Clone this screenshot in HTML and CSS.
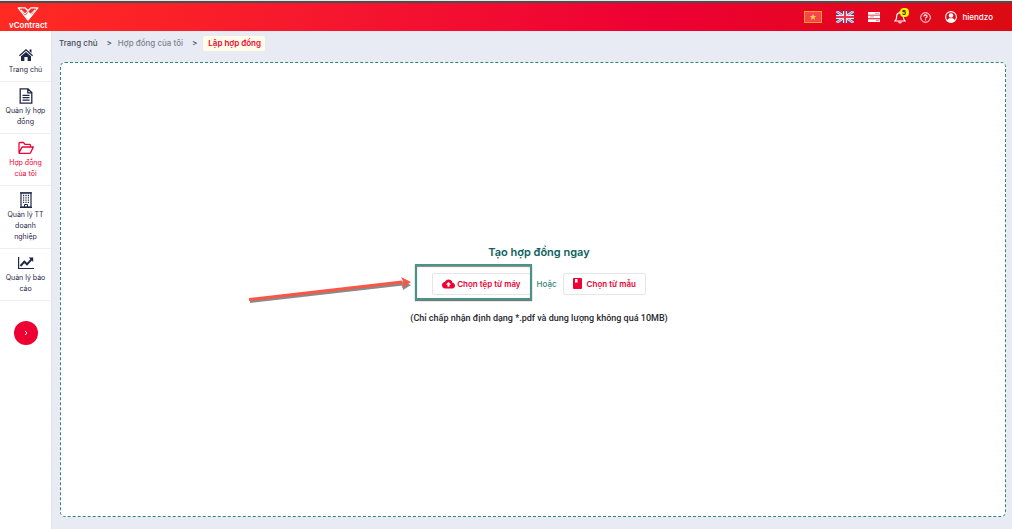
FILE: index.html
```html
<!DOCTYPE html>
<html lang="vi">
<head>
<meta charset="utf-8">
<meta name="viewport" content="width=device-width, initial-scale=1">
<title>vContract</title>
<link rel="stylesheet" href="styles.css">
</head>
<body>
<header class="topbar">
  <a class="brand" href="#">
    <svg class="brand-mark" viewBox="0 0 24 15" aria-hidden="true">
      <path d="M1.500 1H9L12 4L15 1H22.500L12 14Z" fill="none" stroke="#fff" stroke-width="1.400" stroke-linejoin="round"/>
      <path d="M4.500 3L9 7.500L12 4M19.500 3L15 7.500" stroke="#fff" stroke-width="1.100" fill="none"/>
      <path d="M12 4.500L16.500 8.500L12 14L8.500 9.500L11 7.500Z" fill="#fff"/>
    </svg>
    <span class="brand-name">vContract</span>
  </a>
  <nav class="tools" aria-label="Công cụ">
    <button class="tool flag-tool" type="button" aria-label="Tiếng Việt">
      <svg width="18" height="12" viewBox="0 0 18 12"><rect x=".5" y=".5" width="17" height="11" fill="#f74452" stroke="#f2a21c"/><path d="M9 2.800l.9 2.200h2.300l-1.800 1.500.7 2.400L9 7.500 6.900 8.900l.7-2.400L5.800 5h2.300z" fill="#ffd43a"/></svg>
    </button>
    <button class="tool flag-tool" type="button" aria-label="English">
      <svg width="18" height="12" viewBox="0 0 18 12"><rect width="18" height="12" fill="#3d4f9b"/><path d="M0 0L18 12M18 0L0 12" stroke="#f3dfe8" stroke-width="2.600"/><path d="M0 0L18 12M18 0L0 12" stroke="#e0495f" stroke-width=".8"/><path d="M9 0V12M0 6H18" stroke="#f6e6ec" stroke-width="4"/><path d="M9 0V12M0 6H18" stroke="#df3a50" stroke-width="2"/></svg>
    </button>
    <button class="tool" type="button" aria-label="Danh sách">
      <svg width="12" height="10" viewBox="0 0 12 10"><path d="M0 0h12v2.700H0zM0 3.600h12v2.700H0zM0 7.200h12v2.700H0z" fill="#fff"/><path d="M7 1.300h4M2 4.900h4M8 8.500h3" stroke="#ee7786" stroke-width=".8"/></svg>
    </button>
    <button class="tool bell" type="button" aria-label="Thông báo">
      <svg width="12" height="13" viewBox="0 0 12 13" fill="none" stroke="#fff" stroke-width="1.200"><path d="M1 10h10C9.300 8.500 9.300 7 9.300 5.200 9.300 3 8 1.800 6 1.800S2.700 3 2.700 5.200C2.700 7 2.700 8.500 1 10Z"/><path d="M6 .3v1.500M4.700 10.500c0 2 2.600 2 2.600 0"/></svg>
      <span class="badge">5</span>
    </button>
    <button class="tool" type="button" aria-label="Trợ giúp">
      <svg width="11" height="11" viewBox="0 0 11 11" fill="none" stroke="#fff"><circle cx="5.500" cy="5.500" r="4.800"/><path d="M3.900 4.400c0-2 3.200-2 3.200 0 0 1.200-1.600 1-1.600 2.200M5.500 7.300v1.100" stroke-width="1.100"/></svg>
    </button>
    <button class="tool account" type="button">
      <svg width="12" height="12" viewBox="0 0 12 12"><circle cx="6" cy="6" r="5.400" fill="none" stroke="#fff" stroke-width="1.100"/><circle cx="6" cy="4.500" r="2.300" fill="#fff"/><path d="M2 9.500C2.500 7.600 4 7.200 6 7.200s3.500.4 4 2.300C8 11.600 4 11.600 2 9.500Z" fill="#fff"/></svg>
      <span>hiendzo</span>
    </button>
  </nav>
</header>

<div class="shell">
  <nav class="sidebar" aria-label="Menu chính">
    <a class="item item-first" href="#">
      <svg class="icon" viewBox="0 0 16 16" fill="currentColor"><path d="M8 2L15 8.200 14.200 9.200 8 3.800 1.800 9.200 1 8.200ZM11.500 2.500H13.500V6L11.500 4.300ZM8 4.900L13 9.200V14H9.600V10H6.400V14H3V9.200Z"/></svg>
      <span>Trang chủ</span>
    </a>
    <a class="item" href="#">
      <svg class="icon" viewBox="0 0 16 16" fill="none" stroke="currentColor" stroke-width="1.300"><path d="M2.200.8H10L13.800 4.600V15.200H2.200ZM9.800.8V4.800H13.800M4.500 7.300h7M4.500 9.700h7M4.500 12.100h7"/></svg>
      <span>Quản lý hợp đồng</span>
    </a>
    <a class="item active" href="#">
      <svg class="icon" viewBox="0 0 16 16" fill="none" stroke="currentColor" stroke-width="1.300" stroke-linejoin="round"><path d="M1 12.500V3.500Q1 2.500 2 2.500H5.500L7 4.300H11.500Q12.500 4.300 12.500 5.300V7M1 13L3.700 7.600Q4 7 4.700 7H15.300L12.700 12.500Q12.300 13.300 11.500 13.300H1.300Z"/></svg>
      <span>Hợp đồng của tôi</span>
    </a>
    <a class="item" href="#">
      <svg class="icon" viewBox="0 0 16 16" fill="none" stroke="currentColor"><path d="M3 1H13V15H3Z" stroke-width="1.200"/><path d="M2 .8H14M2 15.300H14" stroke-width="1.200"/><path d="M5 3.500h6M5 5.800h6M5 8.100h6M5 10.400h6" stroke-width="1.300" stroke-dasharray="1.200"/><path d="M6.500 15V12.500H9.500V15"/></svg>
      <span>Quản lý TT doanh nghiệp</span>
    </a>
    <a class="item" href="#">
      <svg class="icon" viewBox="0 0 16 16" fill="none" stroke="currentColor"><path d="M.6 2V13.500H16" stroke-width="1.200"/><path d="M2.500 11L6.300 6.700 9 9.300 13.500 4.300" stroke-width="2"/><path d="M10.700 2.500H15.200V7Z" fill="currentColor" stroke="none"/></svg>
      <span>Quản lý báo cáo</span>
    </a>
    <button class="expand" type="button" aria-label="Mở rộng">
      <svg width="6" height="6" viewBox="0 0 6 6"><path d="M2 1L4 3L2 5" fill="none" stroke="#fff"/></svg>
    </button>
  </nav>

  <main class="content">
    <nav class="crumbs" aria-label="Đường dẫn">
      <a href="#">Trang chủ</a>
      <span class="sep">&gt;</span>
      <a class="muted" href="#">Hợp đồng của tôi</a>
      <span class="sep">&gt;</span>
      <span class="current">Lập hợp đồng</span>
    </nav>
    <section class="dropzone">
      <h1>Tạo hợp đồng ngay</h1>
      <div class="choices">
        <div class="pick">
          <button class="choice" type="button">
            <svg width="13" height="10" viewBox="0 0 13 10"><path d="M10.500 3.800C10 1.600 8.400.5 6.500.5 4.900.5 3.500 1.400 2.900 2.900 1.200 3.100 0 4.500 0 6.200 0 8 1.400 9.500 3.300 9.500H10.300C11.800 9.500 13 8.300 13 6.700 13 5.100 11.900 3.900 10.500 3.800Z" fill="currentColor"/><path d="M6.500 2.900L9.200 5.600H7.500V7.800H5.500V5.600H3.800Z" fill="#fff"/></svg>
            <span>Chọn tệp từ máy</span>
          </button>
          <span class="highlight"></span>
          <svg class="arrow" width="168" height="30" viewBox="0 0 168 30" aria-hidden="true">
            <path d="M3 24L156 6.500V9.500L3 27ZM155 5L164 9L156 14Z" fill="#8a8a8a"/>
            <path d="M2 22L155 4.500V7.500L2 25Z" fill="#fb5545"/><path d="M154 1L164 6L155 12L156.500 6Z" fill="#fb5545"/>
          </svg>
        </div>
        <span class="or">Hoặc</span>
        <button class="choice choice-template" type="button">
          <svg width="9" height="11" viewBox="0 0 9 11"><path d="M1 0H8Q9 0 9 1V10Q9 11 8 11H1Q0 11 0 10V1Q0 0 1 0Z" fill="currentColor"/><path d="M2 1H4.500V5L3.250 4.200 2 5Z" fill="#fff"/></svg>
          <span>Chọn từ mẫu</span>
        </button>
      </div>
      <p class="note">(Chỉ chấp nhận định dạng *.pdf và dung lượng không quá 10MB)</p>
    </section>
  </main>
</div>
</body>
</html>
```
FILE: styles.css
```css
* { box-sizing: border-box; }

body {
  margin: 0;
  min-height: 100vh;
  display: flex;
  flex-direction: column;
  border-top: 1px solid #e4e8ea;
  background: #e8ebf4;
  color: #1f2747;
  font-family: "Liberation Sans", Arial, sans-serif;
  font-size: 8px;
}

a { color: inherit; text-decoration: none; }
button { font: inherit; cursor: pointer; }
svg { display: block; flex: none; }

.topbar {
  display: flex;
  justify-content: space-between;
  height: 30px;
  padding: 0 19px 0 9px;
  border-top: 2px solid #4d4d4d;
  background: linear-gradient(100deg, #ff2b22 0%, #f5152f 35%, #ee0033 65%, #dc0b12 100%);
  color: #fff;
}

.brand {
  display: flex;
  flex-direction: column;
  align-items: center;
  padding-top: 4px;
}
.brand-mark { width: 24px; height: 14px; }
.brand-name {
  font-family: Inter, sans-serif;
  font-size: 8px;
  line-height: 8px;
  font-weight: 600;
}

.tools { display: flex; align-items: center; gap: 14px; }
.tool {
  position: relative;
  display: flex;
  align-items: center;
  gap: 6px;
  padding: 0;
  border: 0;
  background: none;
  color: #fff;
}
.badge {
  position: absolute;
  top: -3px;
  right: -3px;
  width: 9px;
  height: 9px;
  border-radius: 4px;
  background: #fff200;
  color: #222;
  font-size: 7px;
  line-height: 9px;
  font-weight: 700;
  text-align: center;
}
.account { font-family: Inter, sans-serif; font-weight: 500; }

.shell { display: flex; flex: 1; }

.sidebar {
  flex: none;
  display: flex;
  flex-direction: column;
  width: 52px;
  border-right: 1px solid #e1e3ea;
  background: #fff;
}
.item {
  display: flex;
  flex-direction: column;
  align-items: center;
  gap: 1px;
  padding: 6px 4px;
  border-bottom: 1px solid #eceef2;
  font-family: Inter, sans-serif;
  font-size: 7px;
  line-height: 11px;
  text-align: center;
}
.item-first { padding-top: 16px; }
.active { color: #ee0033; }
.icon { width: 16px; height: 16px; }
.expand {
  display: grid;
  place-items: center;
  align-self: center;
  width: 24px;
  height: 24px;
  margin-top: 20px;
  padding: 0;
  border: 0;
  border-radius: 50%;
  background: #ee0033;
}

.content {
  flex: 1;
  min-width: 0;
  display: flex;
  flex-direction: column;
  padding: 4px 6px 12px 7px;
}
.crumbs {
  display: flex;
  align-items: center;
  height: 16px;
  color: #484c59;
  font-family: Inter, sans-serif;
  font-weight: 500;
}
.sep { padding: 0 6px 0 9px; }
.muted { color: #7f8290; }
.current {
  padding: 0 4px 0 5px;
  border-radius: 2px;
  background: #fffdea;
  color: #ee0033;
  line-height: 15px;
  font-weight: 600;
}

.dropzone {
  flex: 1;
  display: flex;
  flex-direction: column;
  align-items: center;
  justify-content: center;
  margin: 11px 0 0 1px;
  padding: 0 0 12px 12px;
  border: 1px dashed #2d8577;
  border-radius: 5px;
  background: #fff;
  font-family: Inter, sans-serif;
}
h1 {
  margin: 0 0 13px;
  color: #0f6260;
  font-size: 11px;
  line-height: 16px;
  font-weight: 600;
}
.choices { display: flex; align-items: center; gap: 6px; }
.pick { position: relative; }
.choice {
  display: flex;
  align-items: center;
  gap: 2px;
  height: 22px;
  padding: 0 9px;
  border: 1px solid #e6e6e6;
  border-radius: 2px;
  background: #fff;
  color: #ee0033;
  font-weight: 600;
}
.choice-template { gap: 5px; }
.or { color: #37827b; font-weight: 500; }
.highlight {
  position: absolute;
  top: -9px;
  left: -17px;
  right: -1px;
  bottom: -5px;
  border: 2px solid #4a938b;
  box-shadow: 0 1px 1px #777, inset 0 1px 1px #888;
  pointer-events: none;
}
.arrow { position: absolute; top: 3px; left: -185px; pointer-events: none; }
.note {
  margin: 17px 0 0;
  color: #26262b;
  font-family: Roboto, sans-serif;
  font-size: 9px;
  line-height: 12px;
  font-weight: 500;
}
```
